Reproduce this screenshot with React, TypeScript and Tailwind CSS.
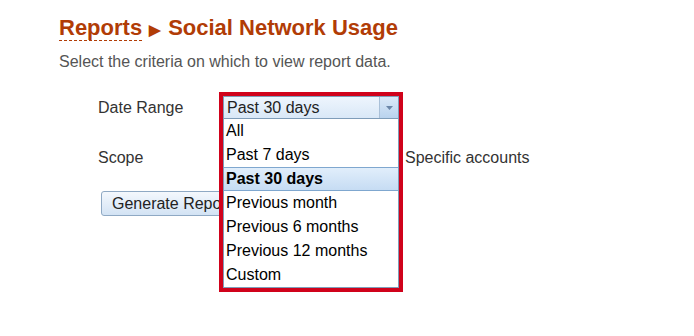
const OPTIONS = [
  "All",
  "Past 7 days",
  "Past 30 days",
  "Previous month",
  "Previous 6 months",
  "Previous 12 months",
  "Custom",
];

function DateDropdown() {
  return (
    <div className="absolute left-[-5px] top-[-4px] w-[184px] border-4 border-[#d0021b] bg-white">
      <div className="border border-[#7f9db9]">
        <div className="flex h-[22px] items-stretch bg-gradient-to-b from-[#eef5fd] to-[#d9e8f7] border-b border-[#7f9db9]">
          <span className="flex-1 pl-[3px] text-[16px] leading-[22px] text-[#222]">Past 30 days</span>
          <span className="flex w-[19px] items-center justify-center border-l border-[#a9c0d8] bg-gradient-to-b from-[#dbe9f8] to-[#b9d3ee]">
            <svg width="7" height="4" viewBox="0 0 7 4">
              <path d="M0 0h7L3.5 4z" fill="#6b86a8" />
            </svg>
          </span>
        </div>
        <ul>
          {OPTIONS.map((o) =>
            o === "Past 30 days" ? (
              <li
                key={o}
                className="h-[24px] border-y border-[#7fa7cf] bg-gradient-to-b from-[#e1eefb] to-[#c6dcf3] pl-[2px] text-[16px] font-bold leading-[22px] text-black"
              >
                {o}
              </li>
            ) : (
              <li key={o} className="h-[24px] pl-[2px] text-[16px] leading-[24px] text-black">
                {o}
              </li>
            )
          )}
        </ul>
      </div>
    </div>
  );
}

export default function App() {
  return (
    <div className="h-[336px] w-[694px] bg-white pl-[59px] pt-[15px] font-['Liberation_Sans',Arial,sans-serif]">
      <h1 className="text-[22px] font-bold leading-[26px] text-[#b13c06]">
        <span className="border-b border-dashed border-[#b13c06]">Reports</span>
        <span className="ml-[7px] mr-[7px] inline-block text-[15px]">▶</span>
        Social Network Usage
      </h1>
      <p className="mt-[9px] text-[16px] leading-[19px] text-[#555]">
        Select the criteria on which to view report data.
      </p>

      <div className="ml-[39px] mt-[25px] text-[16px] text-[#333]">
        <div className="flex h-[23px] items-center">
          <span className="w-[126px]">Date Range</span>
          <div className="relative h-[23px] w-[175px]">
            <DateDropdown />
          </div>
        </div>
        <div className="mt-[27px] flex h-[23px] items-center">
          <span className="w-[307px]">Scope</span>
          <span>Specific accounts</span>
        </div>
        <button className="ml-[3px] mt-[22px] h-[25px] w-[140px] overflow-hidden whitespace-nowrap rounded-[3px] border border-[#8fa9c4] bg-gradient-to-b from-[#f4f8fd] to-[#d3e3f4] pl-[10px] text-left text-[16px] text-[#222]">
          Generate Report
        </button>
      </div>
    </div>
  );
}
